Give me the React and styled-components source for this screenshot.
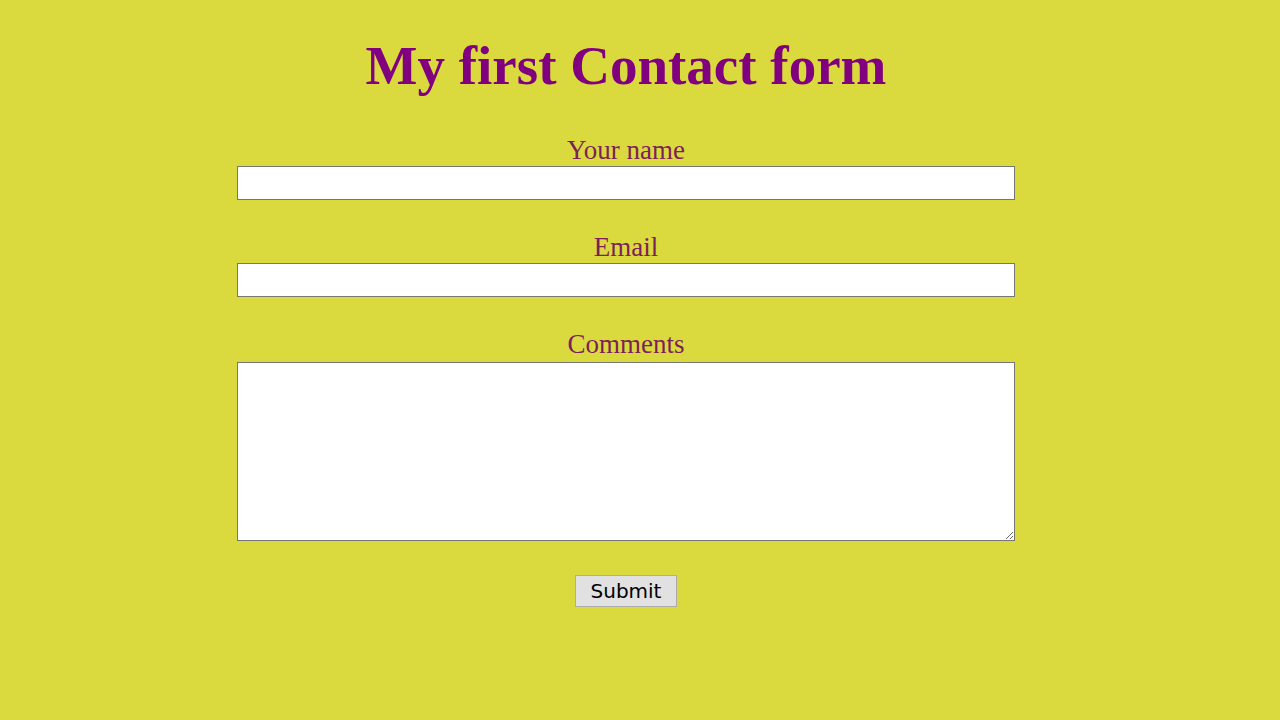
import React from 'react';
import styled, { createGlobalStyle } from 'styled-components';

const GlobalStyle = createGlobalStyle`
  html, body {
    margin: 0;
    padding: 0;
    background: #dada3f;
  }
  body {
    font-family: "Liberation Serif", "Times New Roman", serif;
  }
`;

function App() {
  return (
    <>
      <GlobalStyle />
      <Page>
        <Title>My first Contact form</Title>
        <Form onSubmit={(e) => e.preventDefault()}>
          <Field>
            <Label htmlFor="name">Your name</Label>
            <TextInput id="name" type="text" />
          </Field>
          <Field>
            <Label htmlFor="email">Email</Label>
            <TextInput id="email" type="email" />
          </Field>
          <Field>
            <Label htmlFor="comments">Comments</Label>
            <TextArea id="comments" />
          </Field>
          <SubmitButton type="submit">Submit</SubmitButton>
        </Form>
      </Page>
    </>
  );
}

const Page = styled.div`
  display: flex;
  flex-direction: column;
  align-items: center;
  padding: 34px 28px 0 0;
  min-height: 720px;
  box-sizing: border-box;
`;

const Title = styled.h1`
  margin: 0;
  font-family: "Liberation Serif", "Times New Roman", serif;
  font-size: 55px;
  line-height: 63px;
  font-weight: bold;
  color: #800080;
`;

const Form = styled.form`
  width: 778px;
  margin-top: 39px;
  display: flex;
  flex-direction: column;
  align-items: center;
  gap: 33px;
`;

const Field = styled.div`
  width: 100%;
  display: flex;
  flex-direction: column;
  align-items: center;
`;

const Label = styled.label`
  font-family: "Liberation Serif", "Times New Roman", serif;
  font-size: 27px;
  line-height: 29px;
  padding-bottom: 1px;
  color: #7d1f58;
`;

const TextInput = styled.input`
  width: 100%;
  height: 34px;
  box-sizing: border-box;
  border: 1px solid #767676;
  background: #fff;
  padding: 2px 4px;
  font-size: 18px;
  margin: 0;
`;

const TextArea = styled.textarea`
  width: 100%;
  height: 179px;
  box-sizing: border-box;
  border: 1px solid #767676;
  background: #fff;
  margin: 2px 0 0;
  padding: 2px 4px;
  font-size: 18px;
`;

const SubmitButton = styled.button`
  width: 102px;
  height: 32px;
  margin-top: 1px;
  background: #e1e1e1;
  border: 1px solid #adadad;
  border-radius: 0;
  font-family: "DejaVu Sans", "Liberation Sans", sans-serif;
  font-size: 20px;
  color: #000;
  padding: 0;
`;

export default App;
